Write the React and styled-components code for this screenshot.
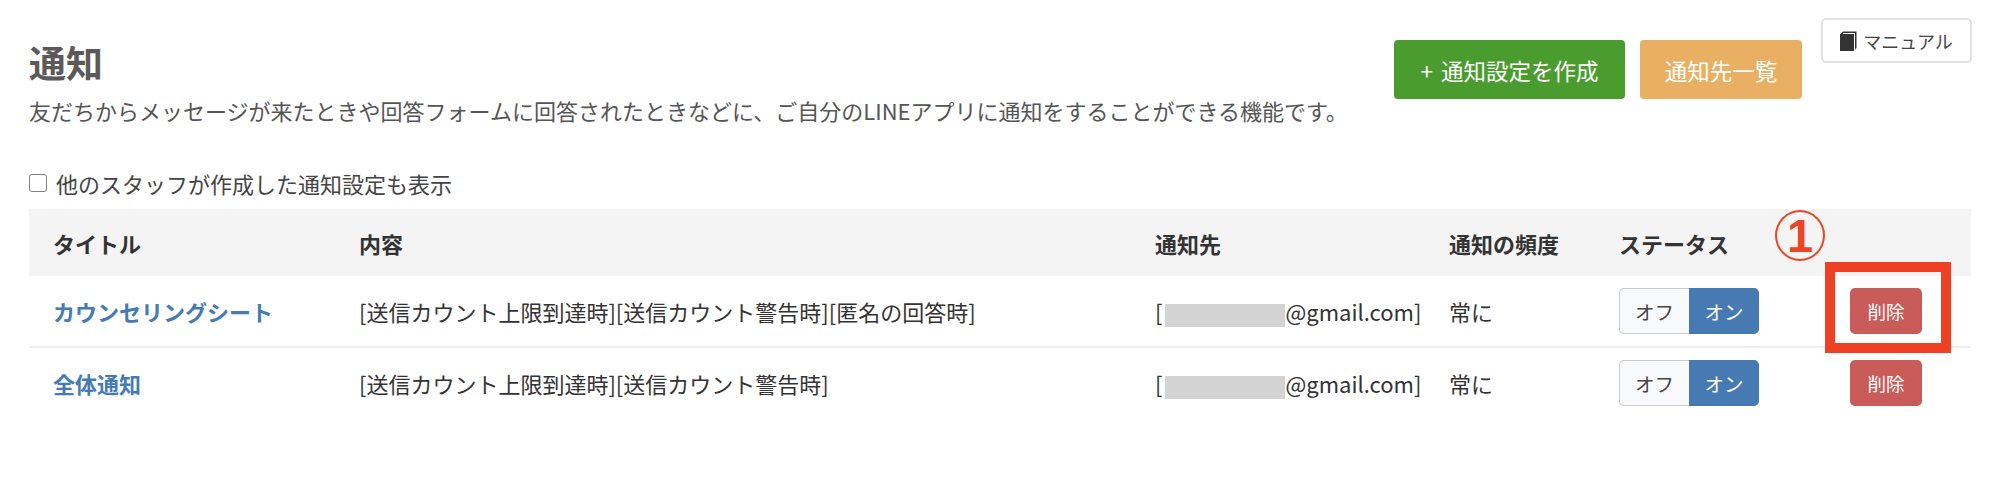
import React from 'react';
import styled, { createGlobalStyle } from 'styled-components';

const Global = createGlobalStyle`
  html, body { margin: 0; padding: 0; background: #fff; }
  body { font-family: "Noto Sans CJK JP", "Liberation Sans", sans-serif; color: #333; }
`;
const Page = styled.div`
  position: relative;
  box-sizing: border-box;
  width: 1999px;
  height: 484px;
  padding: 18px 27px 0 29px;
  overflow: hidden;
`;
const Header = styled.header`
  display: flex;
  align-items: flex-start;
`;
const Heading = styled.div`
  flex: 1;
  padding-top: 22px;
`;
const Title = styled.h1`
  margin: 0;
  font-size: 37px;
  line-height: 44px;
  font-weight: 700;
  color: #5a5a5a;
`;
const Description = styled.p`
  margin: 12px 0 0;
  font-size: 22px;
  line-height: 28px;
  color: #555;
  white-space: nowrap;
`;
const Actions = styled.div`
  display: flex;
  gap: 15px;
  padding-top: 22px;
  margin-right: 19px;
`;
const ActionButton = styled.button`
  height: 59px;
  width: ${p => p.$width}px;
  border: 0;
  border-radius: 4px;
  background: ${p => p.$bg};
  color: #fff;
  font: 400 22.5px "Noto Sans CJK JP", sans-serif;
  word-spacing: 3px;
  padding: 0;
`;
const ManualButton = styled.button`
  display: flex;
  align-items: center;
  justify-content: center;
  gap: 6px;
  width: 151px;
  height: 45px;
  border: 2px solid #e2e2e2;
  border-radius: 5px;
  background: #fff;
  color: #444;
  font: 400 18px "Noto Sans CJK JP", sans-serif;
  padding: 0;
`;
const FilterLabel = styled.label`
  display: flex;
  align-items: center;
  gap: 9px;
  margin-top: 44px;
  height: 30px;
  font-size: 22px;
  color: #444;
`;
const CheckBox = styled.span`
  width: 16px;
  height: 16px;
  border: 1px solid #808080;
  border-radius: 3px;
  background: #fff;
`;
const Table = styled.table`
  width: 1942px;
  margin-top: 11px;
  border-collapse: collapse;
  table-layout: fixed;
`;
const HeadRow = styled.tr`
  height: 67px;
  background: #f4f4f4;
`;
const Th = styled.th`
  padding: 0 0 0 24px;
  text-align: left;
  font-size: 22px;
  font-weight: 700;
  color: #333;
`;
const Row = styled.tr`
  height: 71px;
  border-bottom: ${p => (p.$last ? 0 : '2px solid #eee')};
`;
const Td = styled.td`
  padding: 0 0 0 24px;
  font-size: 22px;
  color: #333;
  white-space: nowrap;
`;
const TitleLink = styled.a`
  color: #447ab5;
  font-weight: 700;
  text-decoration: none;
`;
const Masked = styled.span`
  display: inline-block;
  width: 120px;
  height: 23px;
  margin: 0 0 0 3px;
  background: #d3d3d3;
  vertical-align: middle;
`;
const Toggle = styled.div`
  display: flex;
  width: 140px;
  height: 46px;
`;
const ToggleOff = styled.button`
  width: 70px;
  border: 1px solid #ccc;
  border-right: 0;
  border-radius: 5px 0 0 5px;
  background: #f8f9fa;
  color: #444;
  font: 400 19.5px "Noto Sans CJK JP", sans-serif;
  padding: 0;
`;
const ToggleOn = styled.button`
  width: 70px;
  border: 0;
  border-radius: 0 5px 5px 0;
  background: #477ab3;
  color: #fff;
  font: 400 19.5px "Noto Sans CJK JP", sans-serif;
  padding: 0;
`;
const DeleteButton = styled.button`
  display: block;
  width: 72px;
  height: 46px;
  border: 0;
  border-radius: 5px;
  background: #c95c59;
  color: #fff;
  font: 400 18.5px "Noto Sans CJK JP", sans-serif;
  padding: 0;
`;
const CallNumber = styled.span`
  position: absolute;
  left: 1775px;
  top: 210px;
  box-sizing: border-box;
  width: 50px;
  height: 51px;
  display: flex;
  align-items: center;
  justify-content: center;
  border: 2px solid #ee4325;
  border-radius: 50%;
  color: #ee4325;
  font: 700 47px/1 "Liberation Sans", sans-serif;
`;
const CallBox = styled.div`
  position: absolute;
  left: 1825px;
  top: 262px;
  box-sizing: border-box;
  width: 126px;
  height: 91px;
  border: 10px solid #ee4023;
`;

const BookIcon = () => (
  <svg width="17" height="20" viewBox="0 0 17 20" aria-hidden="true">
    <path d="M0 3.5 L3 0.5 H16.5 V17 L15 18.5 V2 H3.5 L1.8 3.5 Z" fill="#333" />
    <rect x="0" y="3" width="14" height="17" fill="#333" />
  </svg>
);

const rows = [
  { name: 'カウンセリングシート', content: '[送信カウント上限到達時][送信カウント警告時][匿名の回答時]' },
  { name: '全体通知', content: '[送信カウント上限到達時][送信カウント警告時]' },
];

export default function App() {
  return (
    <Page>
      <Global />
      <Header>
        <Heading>
          <Title>通知</Title>
          <Description>友だちからメッセージが来たときや回答フォームに回答されたときなどに、ご自分のLINEアプリに通知をすることができる機能です。</Description>
        </Heading>
        <Actions>
          <ActionButton $bg="#4a9c2f" $width={231}>+ 通知設定を作成</ActionButton>
          <ActionButton $bg="#e9b063" $width={162}>通知先一覧</ActionButton>
        </Actions>
        <ManualButton><BookIcon />マニュアル</ManualButton>
      </Header>
      <FilterLabel><CheckBox />他のスタッフが作成した通知設定も表示</FilterLabel>
      <Table>
        <colgroup>
          <col style={{ width: 306 }} />
          <col style={{ width: 796 }} />
          <col style={{ width: 294 }} />
          <col style={{ width: 170 }} />
          <col style={{ width: 231 }} />
          <col />
        </colgroup>
        <thead>
          <HeadRow>
            <Th>タイトル</Th>
            <Th>内容</Th>
            <Th>通知先</Th>
            <Th>通知の頻度</Th>
            <Th>ステータス</Th>
            <Th />
          </HeadRow>
        </thead>
        <tbody>
          {rows.map((r, i) => (
            <Row key={r.name} $last={i === rows.length - 1}>
              <Td><TitleLink href="#">{r.name}</TitleLink></Td>
              <Td>{r.content}</Td>
              <Td>[<Masked />@gmail.com]</Td>
              <Td>常に</Td>
              <Td>
                <Toggle>
                  <ToggleOff>オフ</ToggleOff>
                  <ToggleOn>オン</ToggleOn>
                </Toggle>
              </Td>
              <Td><DeleteButton>削除</DeleteButton></Td>
            </Row>
          ))}
        </tbody>
      </Table>
      <CallNumber>1</CallNumber>
      <CallBox />
    </Page>
  );
}
